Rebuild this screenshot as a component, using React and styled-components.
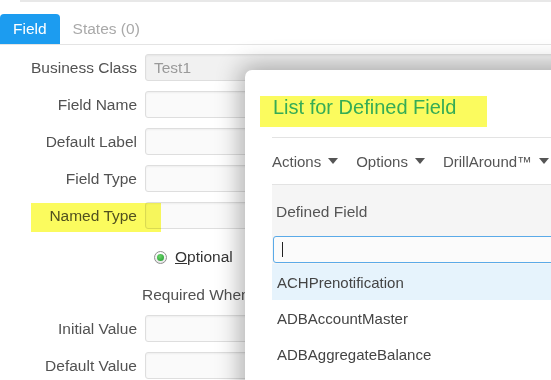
import styled, { createGlobalStyle } from "styled-components";

const Global = createGlobalStyle`
  html, body {
    margin: 0;
    padding: 0;
    background: #fff;
    overflow: hidden;
  }
  body {
    font-family: "Liberation Sans", Arial, sans-serif;
  }
`;

const Page = styled.div`
  position: relative;
  width: 551px;
  height: 380px;
  overflow: hidden;
  background: #fff;
`;

const TopRule = styled.div`
  height: 2px;
  margin-left: 20px;
  background: #e8e8e8;
`;

const TabBar = styled.div`
  display: flex;
  margin-top: 12px;
  border-bottom: 1px solid #e4e4e4;
`;

const Tab = styled.div`
  height: 30px;
  display: flex;
  align-items: center;
  padding: 0 13px;
  font-size: 15.5px;
  border-radius: 4px 4px 0 0;
  color: ${(p) => (p.$active ? "#fff" : "#a9a9a9")};
  background: ${(p) => (p.$active ? "#1c9cf0" : "transparent")};
`;

const Form = styled.div`
  display: grid;
  grid-template-columns: 137px 420px;
  grid-template-rows: 27px 27px 27px 27px 27px 36px 20px 27px 27px;
  column-gap: 8px;
  row-gap: 10px;
  padding-top: 9px;
`;

const Label = styled.div`
  align-self: center;
  text-align: right;
  font-size: 15.5px;
  color: #525252;
  white-space: nowrap;
`;

const Input = styled.div`
  box-sizing: border-box;
  height: 27px;
  border: 1px solid #dedede;
  border-radius: 3px;
  background: ${(p) => (p.$disabled ? "#f1f1f1" : "#fafafa")};
  box-shadow: inset 0 1px 2px rgba(0, 0, 0, 0.05);
  color: #9a9a9a;
  font-size: 15.5px;
  line-height: 25px;
  padding-left: 8px;
`;

const RadioRow = styled.div`
  grid-column: 2;
  display: flex;
  align-items: center;
  padding-left: 9px;
  font-size: 15.5px;
  color: #333;
`;

const Radio = styled.span`
  position: relative;
  width: 13px;
  height: 13px;
  box-sizing: border-box;
  border-radius: 50%;
  border: 1px solid #8f8f8f;
  background: linear-gradient(#fff, #e8e8e8);
  margin-right: 8px;

  &::after {
    content: "";
    position: absolute;
    left: 2px;
    top: 2px;
    width: 7px;
    height: 7px;
    border-radius: 50%;
    background: radial-gradient(circle at 40% 35%, #6ad46a, #1f9a2e);
  }
`;

const Underline = styled.span`
  text-decoration: underline;
`;

const WideRow = styled.div`
  grid-column: 1 / span 2;
  align-self: center;
  padding-left: 142px;
  font-size: 15.5px;
  color: #525252;
  white-space: nowrap;
`;

const Marker = styled.div`
  position: absolute;
  left: ${(p) => p.$x}px;
  top: ${(p) => p.$y}px;
  width: ${(p) => p.$w}px;
  height: ${(p) => p.$h}px;
  background: #fbfb5e;
  mix-blend-mode: multiply;
  pointer-events: none;
  z-index: 5;
`;

const Dialog = styled.div`
  position: absolute;
  left: 245px;
  top: 70px;
  width: 340px;
  height: 340px;
  background: #fff;
  border-radius: 7px 0 0 0;
  box-shadow: 0 0 24px 5px rgba(0, 0, 0, 0.3);
  padding-left: 27px;
  box-sizing: border-box;
`;

const Title = styled.div`
  position: relative;
  z-index: 6;
  margin: 25px 0 18px 1px;
  font-size: 20px;
  line-height: 24px;
  color: #35ac55;
  white-space: nowrap;
`;

const Divider = styled.div`
  border-top: 1px solid #e3e3e3;
`;

const Toolbar = styled.div`
  display: flex;
  align-items: center;
  gap: 18px;
  height: 46px;
  border-bottom: 1px solid #e3e3e3;
  font-size: 15px;
  color: #555;
  white-space: nowrap;
`;

const Menu = styled.div`
  display: flex;
  align-items: center;

  &::after {
    content: "";
    margin-left: 7px;
    border-left: 5.5px solid transparent;
    border-right: 5.5px solid transparent;
    border-top: 6px solid #555;
  }
`;

const Header = styled.div`
  background: #f5f5f5;
  padding: 18px 0 1px 0;
`;

const HeaderLabel = styled.div`
  padding-left: 4px;
  font-size: 15.5px;
  line-height: 18px;
  color: #555;
`;

const Filter = styled.div`
  margin: 15px 0 0 1px;
  height: 27px;
  box-sizing: border-box;
  border: 1px solid #5aaae8;
  border-radius: 3px;
  background: #fbfbfb;
  display: flex;
  align-items: center;
  padding-left: 8px;

  &::before {
    content: "";
    width: 1px;
    height: 15px;
    background: #222;
  }
`;

const Item = styled.div`
  height: 36px;
  display: flex;
  align-items: center;
  padding-left: 5px;
  font-size: 15px;
  color: #444;
  background: ${(p) => (p.$selected ? "#e6f3fc" : "transparent")};
`;

const fields = [
  ["Business Class", "Test1"],
  ["Field Name"],
  ["Default Label"],
  ["Field Type"],
  ["Named Type"],
];

const items = ["ACHPrenotification", "ADBAccountMaster", "ADBAggregateBalance"];

export default function App() {
  return (
    <Page>
      <Global />
      <TopRule />
      <TabBar>
        <Tab $active>Field</Tab>
        <Tab>States (0)</Tab>
      </TabBar>
      <Form>
        {fields.map(([label, value]) => [
          <Label key={label}>{label}</Label>,
          <Input key={label + "-in"} $disabled={!!value}>
            {value}
          </Input>,
        ])}
        <RadioRow>
          <Radio />
          <span>
            <Underline>O</Underline>ptional
          </span>
        </RadioRow>
        <WideRow>Required When</WideRow>
        <Label>Initial Value</Label>
        <Input />
        <Label>Default Value</Label>
        <Input />
      </Form>
      <Marker $x={31} $y={203} $w={130} $h={29} />

      <Dialog>
        <Title>List for Defined Field</Title>
        <Divider />
        <Toolbar>
          <Menu>Actions</Menu>
          <Menu>Options</Menu>
          <Menu>DrillAround™</Menu>
        </Toolbar>
        <Header>
          <HeaderLabel>Defined Field</HeaderLabel>
          <Filter />
        </Header>
        {items.map((name, i) => (
          <Item key={name} $selected={i === 0}>
            {name}
          </Item>
        ))}
      </Dialog>
      <Marker $x={260} $y={96} $w={227} $h={31} />
    </Page>
  );
}
